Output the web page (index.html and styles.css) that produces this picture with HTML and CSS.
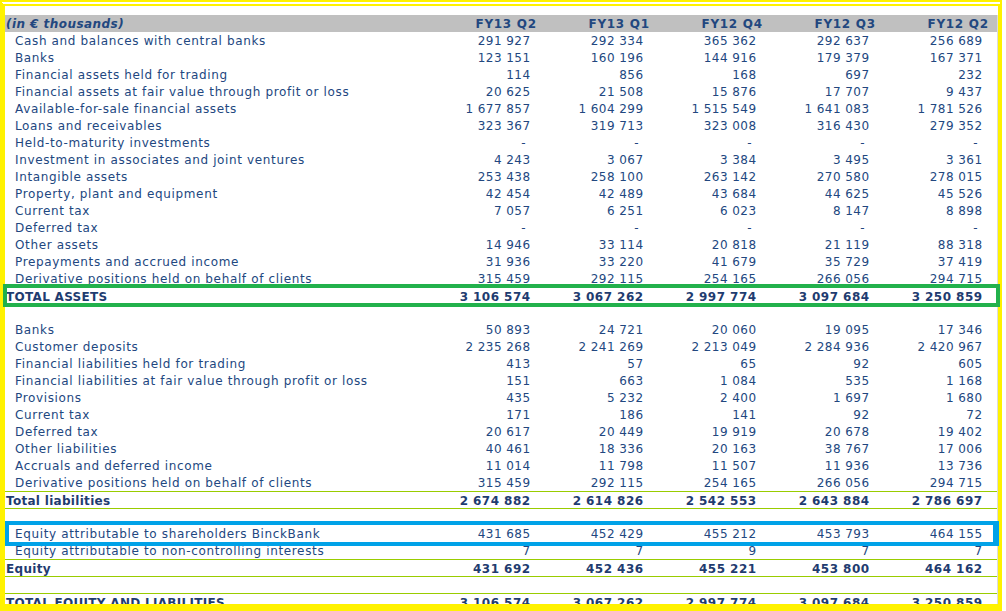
FILE: index.html
```html
<!DOCTYPE html>
<html>
<head>
<meta charset="utf-8">
<link rel="stylesheet" href="styles.css">
</head>
<body>
<div class="page">
  <div class="frame">
    <div class="sheet">
      <div class="row head"><div class="lbl">(in € thousands)</div><div>FY13 Q2</div><div>FY13 Q1</div><div>FY12 Q4</div><div>FY12 Q3</div><div>FY12 Q2</div></div>
      <div class="row"><div class="lbl">Cash and balances with central banks</div><div>291 927</div><div>292 334</div><div>365 362</div><div>292 637</div><div>256 689</div></div>
      <div class="row"><div class="lbl">Banks</div><div>123 151</div><div>160 196</div><div>144 916</div><div>179 379</div><div>167 371</div></div>
      <div class="row"><div class="lbl">Financial assets held for trading</div><div>114</div><div>856</div><div>168</div><div>697</div><div>232</div></div>
      <div class="row"><div class="lbl">Financial assets at fair value through profit or loss</div><div>20 625</div><div>21 508</div><div>15 876</div><div>17 707</div><div>9 437</div></div>
      <div class="row"><div class="lbl">Available-for-sale financial assets</div><div>1 677 857</div><div>1 604 299</div><div>1 515 549</div><div>1 641 083</div><div>1 781 526</div></div>
      <div class="row"><div class="lbl">Loans and receivables</div><div>323 367</div><div>319 713</div><div>323 008</div><div>316 430</div><div>279 352</div></div>
      <div class="row dashes"><div class="lbl">Held-to-maturity investments</div><div>-</div><div>-</div><div>-</div><div>-</div><div>-</div></div>
      <div class="row"><div class="lbl">Investment in associates and joint ventures</div><div>4 243</div><div>3 067</div><div>3 384</div><div>3 495</div><div>3 361</div></div>
      <div class="row"><div class="lbl">Intangible assets</div><div>253 438</div><div>258 100</div><div>263 142</div><div>270 580</div><div>278 015</div></div>
      <div class="row"><div class="lbl">Property, plant and equipment</div><div>42 454</div><div>42 489</div><div>43 684</div><div>44 625</div><div>45 526</div></div>
      <div class="row"><div class="lbl">Current tax</div><div>7 057</div><div>6 251</div><div>6 023</div><div>8 147</div><div>8 898</div></div>
      <div class="row dashes"><div class="lbl">Deferred tax</div><div>-</div><div>-</div><div>-</div><div>-</div><div>-</div></div>
      <div class="row"><div class="lbl">Other assets</div><div>14 946</div><div>33 114</div><div>20 818</div><div>21 119</div><div>88 318</div></div>
      <div class="row"><div class="lbl">Prepayments and accrued income</div><div>31 936</div><div>33 220</div><div>41 679</div><div>35 729</div><div>37 419</div></div>
      <div class="row"><div class="lbl">Derivative positions held on behalf of clients</div><div>315 459</div><div>292 115</div><div>254 165</div><div>266 056</div><div>294 715</div></div>
      <div class="row total"><div class="lbl">TOTAL ASSETS</div><div>3 106 574</div><div>3 067 262</div><div>2 997 774</div><div>3 097 684</div><div>3 250 859</div></div>
      <div class="row blank"></div>
      <div class="row"><div class="lbl">Banks</div><div>50 893</div><div>24 721</div><div>20 060</div><div>19 095</div><div>17 346</div></div>
      <div class="row"><div class="lbl">Customer deposits</div><div>2 235 268</div><div>2 241 269</div><div>2 213 049</div><div>2 284 936</div><div>2 420 967</div></div>
      <div class="row"><div class="lbl">Financial liabilities held for trading</div><div>413</div><div>57</div><div>65</div><div>92</div><div>605</div></div>
      <div class="row"><div class="lbl">Financial liabilities at fair value through profit or loss</div><div>151</div><div>663</div><div>1 084</div><div>535</div><div>1 168</div></div>
      <div class="row"><div class="lbl">Provisions</div><div>435</div><div>5 232</div><div>2 400</div><div>1 697</div><div>1 680</div></div>
      <div class="row"><div class="lbl">Current tax</div><div>171</div><div>186</div><div>141</div><div>92</div><div>72</div></div>
      <div class="row"><div class="lbl">Deferred tax</div><div>20 617</div><div>20 449</div><div>19 919</div><div>20 678</div><div>19 402</div></div>
      <div class="row"><div class="lbl">Other liabilities</div><div>40 461</div><div>18 336</div><div>20 163</div><div>38 767</div><div>17 006</div></div>
      <div class="row"><div class="lbl">Accruals and deferred income</div><div>11 014</div><div>11 798</div><div>11 507</div><div>11 936</div><div>13 736</div></div>
      <div class="row"><div class="lbl">Derivative positions held on behalf of clients</div><div>315 459</div><div>292 115</div><div>254 165</div><div>266 056</div><div>294 715</div></div>
      <div class="row total"><div class="lbl">Total liabilities</div><div>2 674 882</div><div>2 614 826</div><div>2 542 553</div><div>2 643 884</div><div>2 786 697</div></div>
      <div class="row blank"></div>
      <div class="row"><div class="lbl">Equity attributable to shareholders BinckBank</div><div>431 685</div><div>452 429</div><div>455 212</div><div>453 793</div><div>464 155</div></div>
      <div class="row"><div class="lbl">Equity attributable to non-controlling interests</div><div>7</div><div>7</div><div>9</div><div>7</div><div>7</div></div>
      <div class="row total"><div class="lbl">Equity</div><div>431 692</div><div>452 436</div><div>455 221</div><div>453 800</div><div>464 162</div></div>
      <div class="row blank"></div>
      <div class="row total"><div class="lbl">TOTAL EQUITY AND LIABILITIES</div><div>3 106 574</div><div>3 067 262</div><div>2 997 774</div><div>3 097 684</div><div>3 250 859</div></div>
    </div>
  </div>
  <div class="mark mark-green"></div>
  <div class="mark mark-blue"></div>
</div>
</body>
</html>
```
FILE: styles.css
```css
html, body {
  margin: 0;
  padding: 0;
  background: #ffffff;
}
.page {
  position: relative;
  width: 1006px;
  height: 611px;
  overflow: hidden;
  background: #ffffff;
}
.frame {
  box-sizing: border-box;
  width: 1002px;
  height: 611px;
  border-left: 5px solid #fff200;
  border-right: 4px solid #fff200;
  border-top: 6px double #fff200;
  border-bottom: 7px solid #fff200;
  padding-top: 9px;
  overflow: hidden;
  background: #ffffff;
}
.sheet {
  box-sizing: border-box;
  width: 993px;
  border-right: 1px solid #dcdcdc;
  font-family: "DejaVu Sans", Verdana, sans-serif;
  font-size: 12px;
  color: #22477f;
}
.row {
  box-sizing: border-box;
  display: grid;
  grid-template-columns: 427px repeat(5, 113px);
  height: 17px;
  line-height: 17px;
  white-space: nowrap;
}
.row > div {
  text-align: right;
  padding-right: 14.5px;
  padding-top: 1px;
  letter-spacing: 0.45px;
}
.row > .lbl {
  text-align: left;
  padding-left: 10px;
  padding-right: 0;
  letter-spacing: 0.64px;
}
.row.dashes > div:not(.lbl) {
  padding-right: 19px;
}
.head {
  background: #c0c0c0;
  font-weight: bold;
}
.head > div {
  padding-right: 8.3px;
  padding-top: 0.5px;
  letter-spacing: 0.7px;
}
.head > .lbl {
  font-style: italic;
  padding-left: 1px;
  letter-spacing: 0.45px;
}
.total {
  font-weight: bold;
  color: #1f3c70;
  border-top: 1px solid #99cc00;
  line-height: 16px;
  box-shadow: 0 1px 0 #99cc00;
}
.total > div {
  padding-top: 0.5px;
}
.total > .lbl {
  padding-left: 1px;
  letter-spacing: 0.3px;
}
.mark {
  position: absolute;
  box-sizing: border-box;
}
.mark-green {
  left: 3px;
  top: 284px;
  width: 997px;
  height: 23px;
  border: 4px solid #22b14c;
}
.mark-blue {
  left: 5px;
  top: 521px;
  width: 994px;
  height: 25px;
  border-style: solid;
  border-color: #00a2e8;
  border-width: 4px 6px 4px 4px;
}
```
